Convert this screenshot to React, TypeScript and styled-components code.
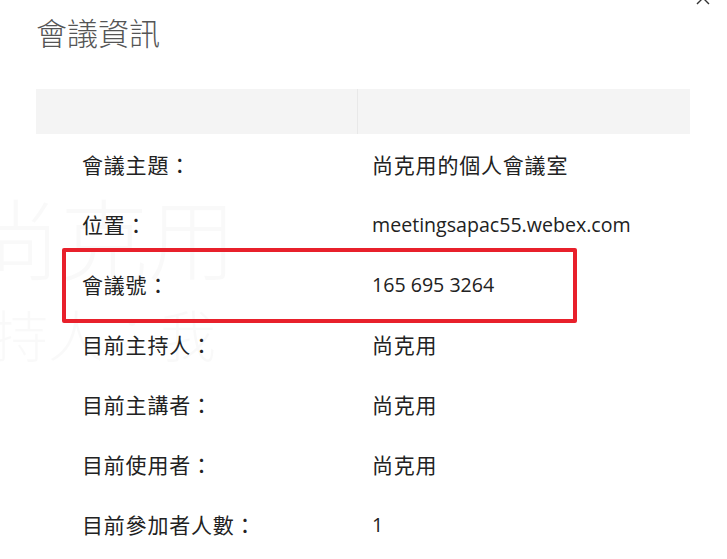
import React from "react";
import styled, { createGlobalStyle } from "styled-components";

const Global = createGlobalStyle`
  html, body { margin: 0; padding: 0; background: #ffffff; }
  body { font-family: "Noto Sans", "Noto Sans CJK TC", sans-serif; }
`;

const Page = styled.div`
  position: relative;
  width: 727px;
  height: 559px;
  overflow: hidden;
  background: #ffffff;
  padding-left: 36px;
  box-sizing: border-box;
`;

const Watermark = styled.div`
  position: absolute;
  left: -28px;
  top: 184px;
  display: flex;
  flex-direction: column;
  color: rgba(0, 0, 0, 0.022);
  font-family: "Noto Sans CJK TC", sans-serif;
  font-weight: 300;
  pointer-events: none;
  z-index: 0;
`;

const WatermarkLine = styled.span<{ $size: number; $shift: number; $gap: number }>`
  font-size: ${(p) => p.$size}px;
  line-height: 1.15;
  margin-left: ${(p) => p.$shift}px;
  margin-top: ${(p) => p.$gap}px;
  white-space: nowrap;
`;

const Close = styled.button`
  position: absolute;
  top: -10px;
  right: 16px;
  width: 16px;
  height: 16px;
  padding: 0;
  border: none;
  background: transparent;
  display: flex;
  align-items: center;
  justify-content: center;
`;

const Title = styled.h1`
  margin: 0;
  padding-top: 12px;
  height: 89px;
  box-sizing: border-box;
  font-family: "Noto Sans CJK TC", sans-serif;
  font-weight: 300;
  font-size: 31px;
  line-height: 40px;
  color: #555555;
  position: relative;
  z-index: 1;
`;

const HeaderBar = styled.div`
  display: grid;
  grid-template-columns: 321px 1fr;
  width: 654px;
  height: 45px;
  background: #f4f4f4;
  position: relative;
  z-index: 1;
`;

const HeaderCell = styled.div<{ $divider?: boolean }>`
  border-left: ${(p) => (p.$divider ? "1px solid #e8e8e8" : "none")};
`;

const Table = styled.div`
  position: relative;
  z-index: 1;
`;

const Row = styled.div`
  display: grid;
  grid-template-columns: 336px 1fr;
  height: 60px;
  align-items: center;
  color: #222222;
  font-size: 21px;
`;

const Label = styled.div`
  padding-left: 46px;
  font-family: "Noto Sans CJK TC", sans-serif;
  letter-spacing: 0.8px;
`;

const Value = styled.div<{ $latin?: boolean }>`
  font-family: ${(p) =>
    p.$latin ? `"Open Sans", "Noto Sans CJK TC", sans-serif` : `"Noto Sans CJK TC", sans-serif`};
  letter-spacing: ${(p) => (p.$latin ? "0" : "0.8px")};
  font-size: ${(p) => (p.$latin ? "19.6px" : "21px")};
`;

const Highlight = styled.div`
  position: absolute;
  left: 26px;
  top: 114px;
  width: 515px;
  height: 75px;
  border: 4px solid #e8202b;
  border-radius: 2px;
  box-sizing: border-box;
  pointer-events: none;
`;

const rows: { label: string; value: string; latin?: boolean }[] = [
  { label: "會議主題：", value: "尚克用的個人會議室" },
  { label: "位置：", value: "meetingsapac55.webex.com", latin: true },
  { label: "會議號：", value: "165 695 3264", latin: true },
  { label: "目前主持人：", value: "尚克用" },
  { label: "目前主講者：", value: "尚克用" },
  { label: "目前使用者：", value: "尚克用" },
  { label: "目前參加者人數：", value: "1", latin: true },
];

export default function App() {
  return (
    <>
      <Global />
      <Page>
        <Watermark aria-hidden="true">
          <WatermarkLine $size={88} $shift={0} $gap={0}>尚克用</WatermarkLine>
          <WatermarkLine $size={56} $shift={-36} $gap={16}>主持人：我</WatermarkLine>
        </Watermark>
        <Close aria-label="關閉">
          <svg width="14" height="14" viewBox="0 0 14 14">
            <path d="M1 1 L13 13 M13 1 L1 13" stroke="#333" strokeWidth="1.4" fill="none" />
          </svg>
        </Close>
        <Title>會議資訊</Title>
        <HeaderBar>
          <HeaderCell />
          <HeaderCell $divider />
        </HeaderBar>
        <Table>
          {rows.map((r) => (
            <Row key={r.label}>
              <Label>{r.label}</Label>
              <Value $latin={r.latin}>{r.value}</Value>
            </Row>
          ))}
          <Highlight />
        </Table>
      </Page>
    </>
  );
}
